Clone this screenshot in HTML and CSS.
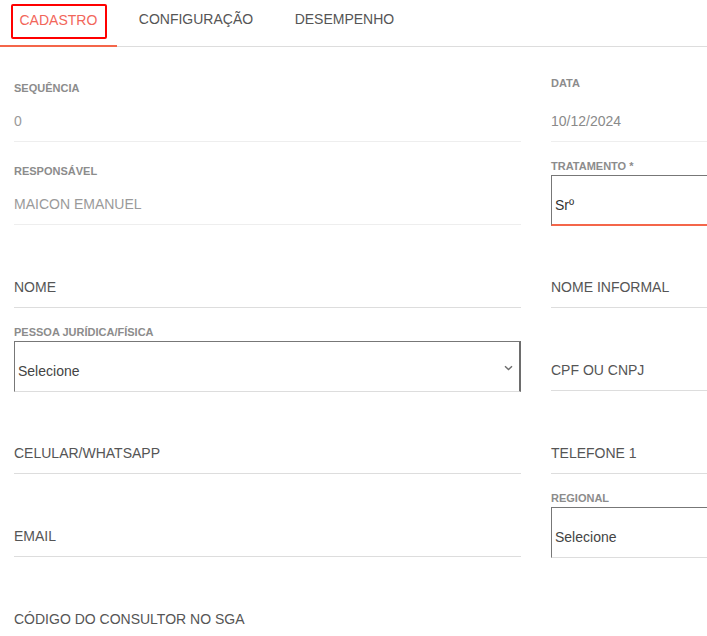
FILE: index.html
```html
<!DOCTYPE html>
<html lang="pt-BR">
<head>
<meta charset="utf-8">
<title>Cadastro</title>
<link rel="stylesheet" href="styles.css">
</head>
<body>
<nav class="tabs">
  <a class="tab tab-active">CADASTRO<span class="tab-focus"></span></a>
  <a class="tab">CONFIGURAÇÃO</a>
  <a class="tab">DESEMPENHO</a>
</nav>

<div class="page">
<form class="form-grid">
  <div class="field">
    <label class="field-label label-tight">SEQUÊNCIA</label>
    <div class="field-readonly">0</div>
  </div>
  <div class="field">
    <label class="field-label">DATA</label>
    <div class="field-readonly field-readonly-tall">10/12/2024</div>
  </div>

  <div class="field">
    <label class="field-label label-tight">RESPONSÁVEL</label>
    <div class="field-readonly">MAICON EMANUEL</div>
  </div>
  <div class="field">
    <label class="field-label">TRATAMENTO *</label>
    <div class="field-box field-box-active">Srº</div>
  </div>

  <div class="field">
    <div class="field-input">NOME</div>
  </div>
  <div class="field">
    <div class="field-input">NOME INFORMAL</div>
  </div>

  <div class="field">
    <label class="field-label">PESSOA JURÍDICA/FÍSICA</label>
    <div class="field-box field-select">
      <span>Selecione</span>
      <svg class="chevron" width="9" height="6" viewBox="0 0 9 6"><path d="M1 1.2 L4.5 4.6 L8 1.2" fill="none" stroke="#6d6d6d" stroke-width="1.4"/></svg>
    </div>
  </div>
  <div class="field">
    <div class="field-input">CPF OU CNPJ</div>
  </div>

  <div class="field">
    <div class="field-input">CELULAR/WHATSAPP</div>
  </div>
  <div class="field">
    <div class="field-input">TELEFONE 1</div>
  </div>

  <div class="field">
    <div class="field-input">EMAIL</div>
  </div>
  <div class="field">
    <label class="field-label">REGIONAL</label>
    <div class="field-box">Selecione</div>
  </div>

  <div class="field">
    <div class="field-input">CÓDIGO DO CONSULTOR NO SGA</div>
  </div>
  <div class="field"></div>
</form>
</div>
</body>
</html>
```
FILE: styles.css
```css
html, body {
  margin: 0;
  padding: 0;
  background: #fff;
  overflow: hidden;
}

body {
  font-family: "Liberation Sans", Arial, sans-serif;
  font-size: 14px;
  color: #555;
}

/* tab bar */
.tabs {
  display: flex;
  gap: 2.5px;
  height: 47px;
  border-bottom: 1px solid #ddd;
  box-sizing: border-box;
}

.tab {
  position: relative;
  display: flex;
  align-items: center;
  padding: 0 19.5px 8px;
  color: #555;
  font-size: 14px;
  line-height: 16px;
  cursor: pointer;
}

.tab-active {
  color: #f2665a;
  box-shadow: inset 0 -2px 0 #f4664a;
  margin-bottom: -1px;
}

.tab-focus {
  position: absolute;
  left: 11px;
  top: 4px;
  width: 96px;
  height: 35px;
  border: 2px solid #ff0000;
  border-radius: 2px;
  box-sizing: border-box;
}

/* form; the right column continues beyond the visible width */
.page {
  overflow: hidden;
}

.form-grid {
  display: grid;
  grid-template-columns: 507px 507px;
  column-gap: 30px;
  padding: 12px 0 0 14px;
  margin: 0;
}

.field {
  height: 83px;
  display: flex;
  flex-direction: column;
  justify-content: flex-end;
}

.field-label {
  font-size: 11px;
  line-height: 13px;
  font-weight: bold;
  color: #8c8c8c;
  margin-bottom: 2px;
}

.label-tight {
  margin-bottom: 3px;
}

.field-readonly {
  height: 44px;
  box-sizing: border-box;
  padding-top: 14px;
  line-height: 18px;
  color: #9a9a9a;
  border-bottom: 1px solid #eee;
}

.field-readonly-tall {
  height: 50px;
  padding-top: 20px;
  color: #8a8a8a;
}

.field-input {
  height: 50px;
  box-sizing: border-box;
  padding-top: 20px;
  line-height: 18px;
  color: #555;
  border-bottom: 1px solid #ddd;
}

.field-box {
  height: 51px;
  box-sizing: border-box;
  padding: 20px 0 0 3px;
  line-height: 18px;
  color: #444;
  border: 1px solid #777;
  border-right: none;
  border-bottom: 1px solid #ddd;
  margin-bottom: -1px;
}

.field-box-active {
  color: #333;
  border-bottom: 2px solid #f4664a;
}

.field-select {
  display: flex;
  align-items: flex-start;
  justify-content: space-between;
  border-right: 2px solid #6d6d6d;
}

.chevron {
  margin: 3px 6px 0 0;
}
```
